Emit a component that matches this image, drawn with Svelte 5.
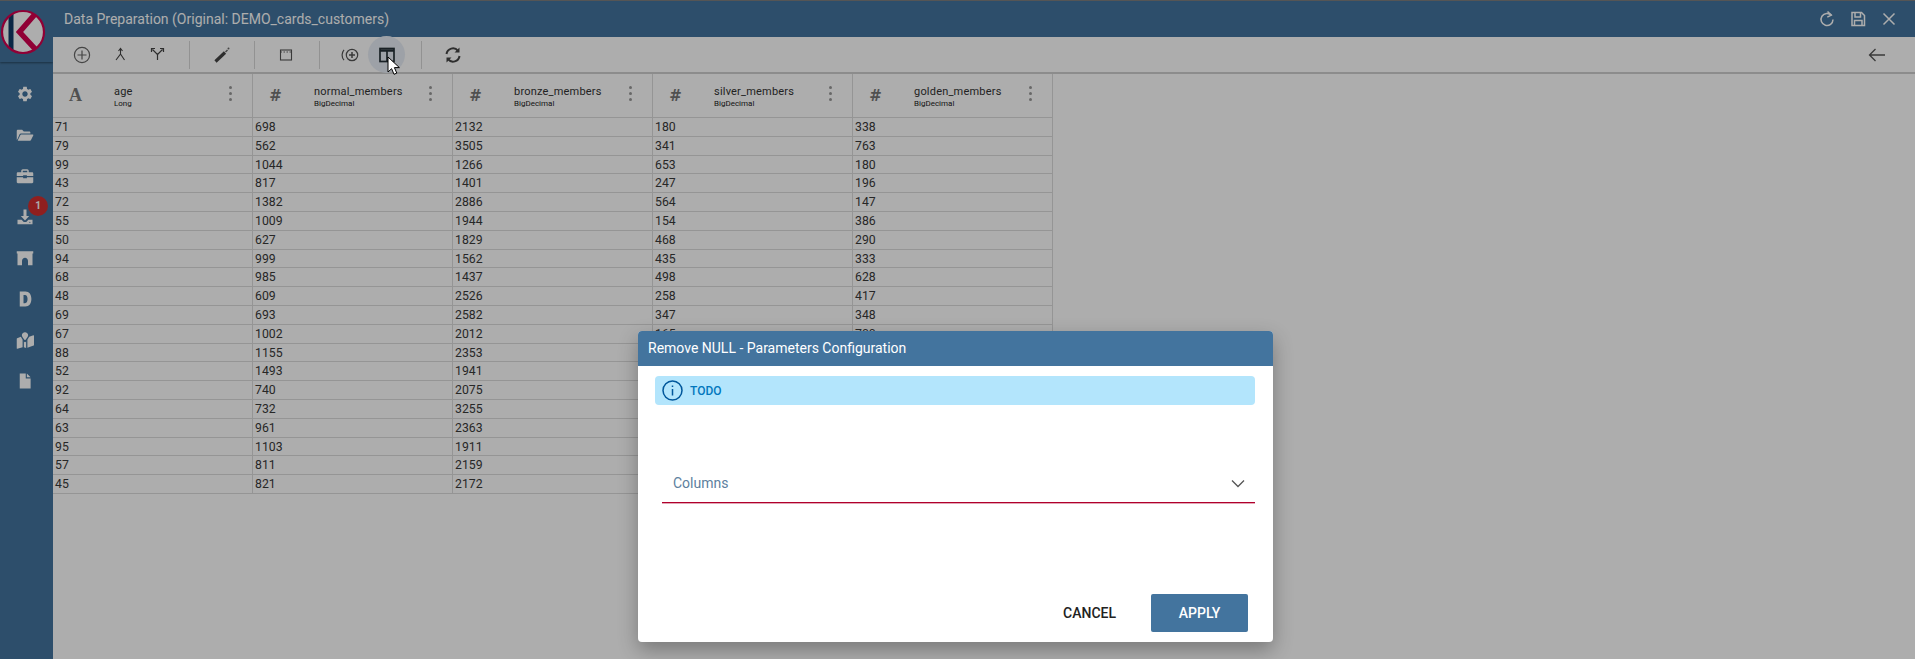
<script>
  const columns = [
    { glyph: 'A', name: 'age', type: 'Long', serif: true },
    { glyph: '#', name: 'normal_members', type: 'BigDecimal' },
    { glyph: '#', name: 'bronze_members', type: 'BigDecimal' },
    { glyph: '#', name: 'silver_members', type: 'BigDecimal' },
    { glyph: '#', name: 'golden_members', type: 'BigDecimal' }
  ];
  const rows = [
    [71, 698, 2132, 180, 338], [79, 562, 3505, 341, 763], [99, 1044, 1266, 653, 180],
    [43, 817, 1401, 247, 196], [72, 1382, 2886, 564, 147], [55, 1009, 1944, 154, 386],
    [50, 627, 1829, 468, 290], [94, 999, 1562, 435, 333], [68, 985, 1437, 498, 628],
    [48, 609, 2526, 258, 417], [69, 693, 2582, 347, 348], [67, 1002, 2012, 165, 700],
    [88, 1155, 2353, 412, 255], [52, 1493, 1941, 310, 482], [92, 740, 2075, 279, 531],
    [64, 732, 3255, 620, 164], [63, 961, 2363, 388, 209], [95, 1103, 1911, 476, 352],
    [57, 811, 2159, 233, 440], [45, 821, 2172, 509, 271]
  ];
  const side = [
    { d: 'M19.14 12.94c.04-.3.06-.61.06-.94 0-.32-.02-.64-.07-.94l2.03-1.58c.18-.14.23-.41.12-.61l-1.92-3.32c-.12-.22-.37-.29-.59-.22l-2.39.96c-.5-.38-1.03-.7-1.62-.94l-.36-2.54c-.04-.24-.24-.41-.48-.41h-3.84c-.24 0-.43.17-.47.41l-.36 2.54c-.59.24-1.13.57-1.62.94l-2.39-.96c-.22-.08-.47 0-.59.22L2.74 8.87c-.12.21-.08.47.12.61l2.03 1.58c-.05.3-.09.63-.09.94s.02.64.07.94l-2.03 1.58c-.18.14-.23.41-.12.61l1.92 3.32c.12.22.37.29.59.22l2.39-.96c.5.38 1.03.7 1.62.94l.36 2.54c.05.24.24.41.48.41h3.84c.24 0 .44-.17.47-.41l.36-2.54c.59-.24 1.13-.56 1.62-.94l2.39.96c.22.08.47 0 .59-.22l1.92-3.32c.12-.22.07-.47-.12-.61l-2.01-1.58zM12 15.6c-1.98 0-3.6-1.62-3.6-3.6s1.62-3.6 3.6-3.6 3.6 1.62 3.6 3.6-1.62 3.6-3.6 3.6z' },
    { d: 'M1 6.5C1 5.7 1.7 5 2.5 5h5.7l2.2 2.2h7.3c.8 0 1.5.7 1.5 1.5V10H6.6c-.8 0-1.5.4-1.8 1.1L2.4 16.5 1 18.5zM6.9 11.3h15.4c.6 0 1 .6.7 1.2l-3.2 6.4c-.2.4-.6.6-1.1.6H2.8c-.3 0-.5-.3-.4-.6l3.5-6.9c.2-.4.6-.7 1-.7z' },
    { d: 'M9 3h6c1 0 2 1 2 2v2h4.5c.8 0 1.5.7 1.5 1.5V12h-8.5v-1h-5v1H1V8.5C1 7.700 1.700 7 2.500 7H7V5c0-1 1-2 2-2zm0 2v2h6V5zM1 13.500h8.500V15h5v-1.500H23V20c0 .8-.7 1.500-1.500 1.500h-19C1.700 21.500 1 20.800 1 20z' },
    { d: 'M10 2h4v8.500h3.600L12 16.500 6.400 10.500H10zM2 15.500h5.500l2.800 3h3.400l2.800-3H22V21.500H2zM18.500 18.300a.8.8 0 1 0 0 1.600.8.8 0 0 0 0-1.600z' },
    { d: 'M1 3h22v3H22v15.500h-6V16c0-2.500-1.800-4.500-4-4.500S8 13.500 8 16v5.500H2V6H1z' },
    { d: 'M5 2h7.500c5.300 0 8 4 8 10s-2.700 10-8 10H5zm5 4.500v11h2c2.400 0 3.400-2.500 3.400-5.500s-1-5.500-3.400-5.500z' },
    { d: 'M12 1.500c2.300 0 4.200 1.800 4.200 4.100 0 1.700-2.600 5-3.700 6.300-.3.300-.7.300-1 0C10.400 10.600 7.800 7.300 7.800 5.600c0-2.300 1.900-4.100 4.200-4.100zM1.500 9.700l5-1.900c.4 1 1.300 2.400 2.300 3.700V21.500l-7 2.300c-.4.100-.8-.2-.8-.6V10.500c0-.4.200-.7.500-.8zM10.500 14c.5.500 1 .9 1.500.9s1-.4 1.500-.9v8.800l-3-1zM15.200 11.500c1-1.300 1.900-2.700 2.400-3.700l5.600-2.200c.4-.1.800.2.800.6v12.400c0 .4-.2.7-.5.800l-8.300 2.900z' },
    { d: 'M5 2h8v6.500h6.500V22H5zM14.500 2l5 5h-5z' }
  ];
</script>

<div class="shell">
  <aside class="rail">
    <div class="logo">
      <svg width="46" height="46" viewBox="0 0 46 46">
        <defs><clipPath id="logo-clip"><circle cx="23" cy="23" r="21" /></clipPath></defs>
        <circle cx="23" cy="23" r="21" fill="#fff" />
        <g clip-path="url(#logo-clip)">
          <rect x="8.500" y="0" width="5" height="46" fill="#0f3a66" />
          <path d="M36 4 L19.500 23 L38 43" fill="none" stroke="#d4004f" stroke-width="5.500" />
        </g>
        <circle cx="23" cy="23" r="21" fill="none" stroke="#d4004f" stroke-width="2.200" />
      </svg>
    </div>
    <nav class="rail-icons">
      {#each side as icon, i}
        <div class="rail-item">
          <svg width="18" height="18" viewBox="0 0 24 24"><path d={icon.d} fill="#fff" fill-rule="evenodd" /></svg>
          {#if i === 3}<span class="badge">1</span>{/if}
        </div>
      {/each}
    </nav>
  </aside>

  <main class="main">
    <header class="title">
      <span class="title-text">Data Preparation (Original: DEMO_cards_customers)</span>
      <div class="title-icons">
        <svg width="18" height="18" viewBox="0 0 18 18" fill="none" stroke="#fff" stroke-width="1.500"><path d="M13.500 5.500A6 6 0 1 0 15 9.500" /><path d="M9.500 1.500l3.800 3.600-4 2" fill="none" /></svg>
        <svg width="18" height="18" viewBox="0 0 18 18" fill="none" stroke="#fff" stroke-width="1.500"><path d="M3 2.500h9.500L15.500 5.500V15.500H3z" /><path d="M6 3v4h5.500V3M5.500 15v-4.500h7.500V15" /></svg>
        <svg width="18" height="18" viewBox="0 0 18 18" fill="none" stroke="#fff" stroke-width="1.500"><path d="M3.500 3.500l11 11M14.500 3.500l-11 11" /></svg>
      </div>
    </header>

    <div class="toolbar">
      <div class="tool-group g1">
        <svg width="20" height="20" viewBox="0 0 20 20" fill="none" stroke="#666" stroke-width="1.200"><circle cx="10" cy="10" r="7.600" /><path d="M10 5.500v9M5.500 10h9" /></svg>
        <svg width="17" height="17" viewBox="0 0 17 17" fill="none" stroke="#444" stroke-width="1.100"><path d="M8.500 3v5L4 14M8.500 8l4 6M6.500 5l2-2.500 2 2.500" /></svg>
        <svg width="17" height="17" viewBox="0 0 17 17" fill="none" stroke="#444" stroke-width="1.200"><path d="M8.500 14V8.500L3.500 3.500M8.500 8.500l5-5M2.500 6V2.500H6M14.500 6V2.500H11" /></svg>
      </div>
      <span class="sep"></span>
      <div class="tool-group g2">
        <svg width="20" height="20" viewBox="0 0 20 20"><path d="M3.500 16.500l9.500-9" stroke="#444" stroke-width="3.200" /><path d="M13.500 7l2-2" stroke="#666" stroke-width="1.500" /><circle cx="16.500" cy="3.500" r="1" fill="#666" /></svg>
      </div>
      <span class="sep"></span>
      <div class="tool-group g3">
        <svg width="14" height="14" viewBox="0 0 14 14" fill="none" stroke="#555" stroke-width="1.100"><rect x="1.500" y="2" width="11" height="10" /><path d="M1.500 4h11" stroke-dasharray="1.500 1.500" stroke-width=".9" /></svg>
      </div>
      <span class="sep"></span>
      <div class="tool-group g4">
        <svg width="22" height="20" viewBox="0 0 22 20" fill="none" stroke="#555" stroke-width="1.200"><circle cx="14" cy="10" r="5.700" /><path d="M14 7v6M11 10h6" stroke-width="1.500" /><path d="M6 4.800a8 8 0 0 0 0 10.400" /></svg>
        <span class="hovered">
          <svg width="16" height="16" viewBox="0 0 16 16" fill="none" stroke="#263238" stroke-width="1.700"><rect x="1" y="1.500" width="14" height="13" /><path d="M1 3.500h14" stroke-width="2.500" /><path d="M8 3v11" /></svg>
        </span>
      </div>
      <span class="sep"></span>
      <div class="tool-group g5">
        <svg width="18" height="18" viewBox="0 0 18 18" fill="none" stroke="#444" stroke-width="2"><path d="M2.500 8a6.500 6.500 0 0 1 11.500-3.200" /><path d="M15.500 10a6.500 6.500 0 0 1-11.500 3.200" /><path d="M15.500 1.500v5h-5zM2.500 16.500v-5h5z" fill="#444" stroke="none" /></svg>
      </div>
      <svg class="back" width="18" height="14" viewBox="0 0 18 14" fill="none" stroke="#555" stroke-width="1.300"><path d="M17 7H1.500M7.500 1L1.500 7l6 6" /></svg>
    </div>

    <div class="grid">
      <div class="head">
        {#each columns as c}
          <div class="hcell">
            <span class="glyph" class:serif={c.serif}>{c.glyph}</span>
            <div class="names">
              <span class="name">{c.name}</span>
              <span class="type">{c.type}</span>
            </div>
            <span class="kebab"><i></i><i></i><i></i></span>
          </div>
        {/each}
      </div>
      {#each rows as r}
        <div class="row">
          {#each r as v}<div class="cell">{v}</div>{/each}
        </div>
      {/each}
    </div>
  </main>

  <div class="scrim">
    <section class="dialog">
      <h2 class="dialog-title">Remove NULL - Parameters Configuration</h2>
      <div class="dialog-body">
        <div class="alert">
          <svg width="21" height="21" viewBox="0 0 21 21" fill="none" stroke="#01579b" stroke-width="1.500"><circle cx="10.500" cy="10.500" r="9.500" /><path d="M10.500 9v6.500" /><path d="M10.500 5.500v1.600" /></svg>
          <span>TODO</span>
        </div>
        <div class="select">
          <span>Columns</span>
          <svg width="14" height="9" viewBox="0 0 14 9" fill="none" stroke="#555" stroke-width="1.300"><path d="M1 1.500l6 6 6-6" /></svg>
        </div>
      </div>
      <footer class="actions">
        <button class="cancel">CANCEL</button>
        <button class="apply">APPLY</button>
      </footer>
    </section>
  </div>

  <svg class="cursor" width="14" height="20" viewBox="0 0 14 20"><path d="M1 1v15l3.600-3.300 2.400 5.600 2.800-1.200-2.400-5.500h5z" fill="#fff" stroke="#000" stroke-width="1" /></svg>
</div>

<style>
  :global(body) { margin: 0; font-family: Roboto, sans-serif; background: #fff; }
  .shell { position: relative; display: flex; width: 1915px; height: 659px; overflow: hidden; border-top: 1px solid #555; box-sizing: border-box; }

  .rail { width: 53px; flex: none; background: #43749e; display: flex; flex-direction: column; }
  .logo { height: 61px; box-sizing: border-box; padding: 8px 0 0 0; box-shadow: 0 1px 2px rgba(0,0,0,.4); }
  .logo svg { display: block; }
  .rail-icons { display: flex; flex-direction: column; padding-top: 11px; }
  .rail-item { position: relative; height: 41.1px; display: flex; align-items: center; justify-content: center; padding-right: 3px; box-sizing: border-box; }
  .badge { position: absolute; left: 28px; top: 0; width: 20px; height: 20px; border-radius: 50%; background: #d32f2f; color: #fff; font-size: 10px; font-weight: 700; line-height: 20px; text-align: center; }

  .main { flex: 1; min-width: 0; display: flex; flex-direction: column; }
  .title { height: 36px; background: #43749e; display: flex; align-items: center; justify-content: space-between; padding: 0 17px 0 11px; flex: none; }
  .title-text { color: #fff; font-size: 14px; }
  .title-icons { display: flex; gap: 13px; }

  .toolbar { height: 37px; flex: none; display: flex; align-items: center; border-bottom: 2px solid #cfcfcf; background: #fff; box-sizing: border-box; }
  .tool-group { display: flex; align-items: center; }
  .g1 { width: 136px; gap: 20px; padding-left: 19px; box-sizing: border-box; }
  .g2 { width: 64px; justify-content: center; }
  .g3 { width: 64px; justify-content: center; padding-right: 2px; box-sizing: border-box; }
  .g4 { width: 101px; padding-left: 18px; box-sizing: border-box; gap: 8px; }
  .g5 { width: 64px; justify-content: center; padding-right: 2px; box-sizing: border-box; }
  .sep { width: 1px; height: 28px; background: #d8d8d8; flex: none; }
  .hovered { width: 37px; height: 37px; border-radius: 50%; background: #e8eef6; display: flex; align-items: center; justify-content: center; margin: -2px 0; }
  .back { margin-left: auto; margin-right: 29px; }

  .grid { display: flex; flex-direction: column; width: 1000px; color: #333; }
  .head { display: grid; grid-template-columns: repeat(5, 200px); height: 44px; border-bottom: 1px solid #dcdcdc; box-sizing: border-box; }
  .hcell { display: flex; align-items: center; border-right: 1px solid #dcdcdc; position: relative; }
  .glyph { width: 45px; margin-right: 16px; text-align: center; font-family: "DejaVu Sans", sans-serif; font-weight: 700; font-size: 15px; color: #777; }
  .glyph.serif { font-family: "Liberation Serif", serif; font-size: 18px; }
  .names { display: flex; flex-direction: column; flex: 1; margin-top: 1px; }
  .name { font-size: 11px; line-height: 14px; color: #333; letter-spacing: .2px; }
  .type { font-size: 8px; line-height: 9px; color: #222; }
  .kebab { display: flex; flex-direction: column; gap: 3px; margin-right: 20px; margin-top: -4px; }
  .kebab i { display: block; width: 3px; height: 3px; border-radius: 50%; background: #999; }

  .row { display: grid; grid-template-columns: repeat(5, 200px); height: 18.8px; border-bottom: 1px solid #dcdcdc; box-sizing: border-box; }
  .cell { border-right: 1px solid #dcdcdc; padding-left: 2px; font-size: 12.25px; line-height: 18px; font-family: Roboto, sans-serif; color: #3a3a3a; }

  .scrim { position: absolute; inset: 0; background: rgba(0,0,0,.32); display: flex; align-items: flex-start; padding: 330px 0 0 638px; box-sizing: border-box; }
  .dialog { width: 635px; height: 311px; background: #fff; border-radius: 4px; overflow: hidden; box-shadow: 0 8px 20px rgba(0,0,0,.3); display: flex; flex-direction: column; }
  .dialog-title { margin: 0; height: 35px; flex: none; background: #43749e; color: #fff; font-size: 14px; font-weight: 400; line-height: 35px; padding-left: 10px; }
  .dialog-body { flex: 1; padding: 10px 18px 0 17px; display: flex; flex-direction: column; }
  .alert { height: 29px; background: #b3e5fc; border-radius: 4px; display: flex; align-items: center; gap: 7px; padding-left: 7px; color: #0277bd; font-size: 12px; font-weight: 500; }
  .select { margin: 59px 0 0 7px; height: 38px; display: flex; align-items: center; justify-content: space-between; border-bottom: 1px solid #b0002c; box-shadow: 0 1px 0 rgba(176,0,44,.35); padding: 0 10px 0 11px; color: #5d7f9e; font-size: 14px; }
  .actions { display: flex; justify-content: flex-end; align-items: center; padding: 0 25px 10px 0; gap: 35px; }
  button { font-family: inherit; border: 0; font-size: 14px; font-weight: 500; background: none; padding: 0; }
  .cancel { color: #222; }
  .apply { width: 97px; height: 38px; background: #43749e; color: #fff; border-radius: 2px; font-weight: 500; }

  .cursor { position: absolute; left: 387px; top: 55px; }
</style>
